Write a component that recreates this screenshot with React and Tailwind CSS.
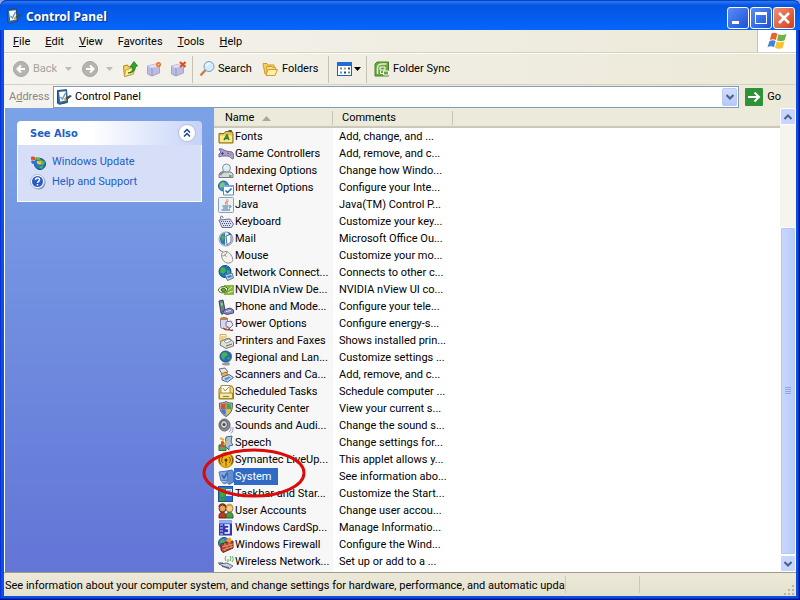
import React from "react";

const icons = {
  fonts: (
    <>
      <path d="M1 4.500h5l1.500-2H14l1 2v9.500H1z" fill="#e9c44c" stroke="#8a6a14" />
      <path d="M2 6.500h12v6.500H2z" fill="#fbe98c" />
      <path d="M6 11l3-5 2 5M7 9.500h4" stroke="#2e7d32" strokeWidth="1.500" fill="none" />
      <path d="M10 1l3 3 1-3z" fill="#356f3c" />
    </>
  ),
  game: (
    <>
      <path d="M1 3c3-1 4 1 7 2l6 1c2 1 2 6 1 7-2 0-3-3-5-3H5c-2 0-3 1-4 1V8l2-2z" fill="#aaa3cf" stroke="#6f679c" />
      <path d="M3 7.500h3M4.500 6v3" stroke="#4f4a78" />
      <circle cx="10" cy="7.500" r="1" fill="#d9534f" />
      <circle cx="12.500" cy="8.500" r="1" fill="#58b368" />
    </>
  ),
  indexing: (
    <>
      <path d="M1 11l2-2h10l2 2v3.500H1z" fill="#d5d8db" stroke="#777d84" />
      <path d="M11 13h2.500" stroke="#2faa3c" strokeWidth="1.500" />
      <path d="M6 8l-4 4" stroke="#8b8f94" strokeWidth="2" />
      <circle cx="8.500" cy="5" r="4" fill="#dceefa" stroke="#8a9299" />
      <path d="M6.500 4.500a2 2 0 0 1 2-2" stroke="#fff" fill="none" />
    </>
  ),
  internet: (
    <>
      <circle cx="5.500" cy="6" r="5" fill="#3b8fd0" stroke="#1f5c96" />
      <path d="M2 4l3-2 2 2-2 3-3 1z" fill="#7cc878" />
      <path d="M5.500 5.500h10v9.500h-10z" fill="#fff" stroke="#5f88b5" />
      <path d="M5 5h11v2H5z" fill="#7ca8dc" />
      <path d="M7.500 10.500l2 2 4-4" stroke="#1b65b3" strokeWidth="1.500" fill="none" />
    </>
  ),
  java: (
    <>
      <rect x=".5" y=".5" width="15" height="15" rx="1" fill="#edf2f7" stroke="#8ba0b6" />
      <path d="M9 2c1 2-3 3-1 5.500M10.500 4c-2 1-2 2-1 3.500" stroke="#e0702c" fill="none" />
      <path d="M4.500 9h6M5 11h5M3.500 13h8.500M11 9c3-1 2 2 0 2" stroke="#3f6990" fill="none" />
    </>
  ),
  keyboard: (
    <>
      <path d="M3 5c-2-3 2-4 2-1" stroke="#62628a" fill="none" />
      <path d="M1 6l11-1 3.500 5-2 3.500H4z" fill="#dcdff0" stroke="#6a6e9c" />
      <path d="M3 7.500h9M4 9.500h9M5 11.500h8" stroke="#4d5284" strokeDasharray="1 1" />
    </>
  ),
  mail: (
    <>
      <circle cx="8" cy="8" r="7" fill="#e8edf4" stroke="#8896ac" />
      <path d="M2 8a6 6 0 0 1 5-6v12a6 6 0 0 1-5-6z" fill="#2879bd" />
      <path d="M3 5l3-1 1 3-3 3z" fill="#52ad54" />
      <path d="M8 5l5-2v8l-4 3z" fill="#fff" stroke="#5572a0" />
      <path d="M10 1l3 2-2 1z" fill="#274b84" />
    </>
  ),
  mouse: (
    <>
      <path d="M6 5C4 2 2 4 1 1" stroke="#777" fill="none" />
      <path d="M4 5c4-3 7-1 9 2 3 4 2 8-2 8-5 1-9-6-7-10z" fill="#f4f2ee" stroke="#94908a" />
      <path d="M4 8c3 0 5-2 5-5M6.500 6l2 3" stroke="#a29f99" fill="none" />
    </>
  ),
  network: (
    <>
      <circle cx="7" cy="6.500" r="6" fill="#1873bb" stroke="#0d4f8d" />
      <path d="M3 2l4 1 1 3-3 3-3-2zM9 5l3 1-1 3-2-1z" fill="#48b04a" />
      <path d="M7 10l7-2 1.500 5-6 2.500z" fill="#c6d5e6" stroke="#5a7594" />
      <path d="M9 11l4-1 1 2-4 1z" fill="#3c80c8" />
    </>
  ),
  nvidia: (
    <>
      <rect x="6" y="3" width="10" height="10" fill="#86b93c" />
      <path d="M0 8c3-5 8-4 10-1-2 5-8 5-10 1z" fill="#eef5df" stroke="#4a6d18" />
      <path d="M3 8c1-3 4-2 5 0-1 2-4 2-5 0z" fill="#77a832" stroke="#31480f" />
      <path d="M10 8l4-3M10 11l5-2" stroke="#d7ecb2" />
    </>
  ),
  phone: (
    <>
      <path d="M1 2l4-1 2 10-4 3z" fill="#6d7c92" stroke="#39465c" />
      <path d="M2.500 4l2-.5.5 3-2 .5z" fill="#7fd07a" />
      <path d="M6 11l6-2 3.500 2v3L9 15.500 5 14z" fill="#8b87bb" stroke="#4a4780" />
      <path d="M8 12.500l5-1" stroke="#e4e3f5" />
      <path d="M3 14l2 1" stroke="#2c7c3b" strokeWidth="2" />
    </>
  ),
  power: (
    <>
      <rect x="2.500" y="1.500" width="7" height="11" rx="2" fill="#d9d7e6" stroke="#8682a4" />
      <path d="M2 3h8" stroke="#c6823c" strokeWidth="2" />
      <path d="M8 6l5-1 2 4-3 3-4-2z" fill="#eae7f4" stroke="#77729c" />
      <path d="M11 12c0 2 2 3 4 2M5 12c3 3 5 2 7 1" stroke="#9a4b34" strokeWidth="1.500" fill="none" />
    </>
  ),
  printers: (
    <>
      <path d="M2 1.500h6v7H2z" fill="#fff6d2" stroke="#e6ac34" />
      <path d="M3 8l8-3 4.500 4v4L8 15.500 2 12z" fill="#dfdfdb" stroke="#77766f" />
      <path d="M6 8l5-2 2 2-5 2z" fill="#fff" stroke="#999" />
      <path d="M8 13l6-2" stroke="#656565" />
      <path d="M3 4h4M3 6h3" stroke="#dba73c" />
    </>
  ),
  regional: (
    <>
      <ellipse cx="8" cy="14" rx="4" ry="1.500" fill="#9c9c9c" />
      <path d="M12 2a7 7 0 0 1-3 11" stroke="#8c8c8c" fill="none" />
      <circle cx="7.500" cy="6.500" r="5.500" fill="#1e6fc4" stroke="#154d8b" />
      <path d="M4 3l4-1 2 3-3 2-1 3-3-3zM9 8l3-1-1 3z" fill="#4bb24a" />
    </>
  ),
  scanners: (
    <>
      <path d="M1 2l6-1 3 4-6 2z" fill="#e5e6ec" stroke="#676c7f" />
      <path d="M3 7l5-2 2 3-5 2z" fill="#efb953" stroke="#a0701c" />
      <path d="M4 10l7-2.500 4.500 3-6 4.500L4 13z" fill="#d3dcea" stroke="#506384" />
      <path d="M6 11.500l5-2 2 1-5 3z" fill="#5792cf" />
    </>
  ),
  scheduled: (
    <>
      <path d="M1 5l3-3h10l1.500 3v10H1z" fill="#f3d873" stroke="#9b7c25" />
      <path d="M3 1.500h9v8H3z" fill="#fff" stroke="#a08d56" />
      <path d="M5 4l2 3 4-4" stroke="#c2952c" fill="none" />
      <path d="M1.500 9h13v5.500h-13z" fill="#f8e596" stroke="#a98931" />
      <path d="M5 12.500h6" stroke="#4d9b48" />
    </>
  ),
  security: (
    <>
      <path d="M8 .5C6 2 3 2 1.500 2 1 8 3 13 8 15.500 13 13 15 8 14.500 2 13 2 10 2 8 .5z" fill="#a8adb6" stroke="#60656e" />
      <path d="M7.500 2C6 3 4 3.200 2.800 3.200L3 8h4.500z" fill="#e2492f" />
      <path d="M8.500 2c1.500 1 3.500 1.200 4.700 1.200L13 8H8.500z" fill="#4aa73c" />
      <path d="M3.200 8.500h4.300V14c-2.500-1.500-3.800-3-4.300-5.500z" fill="#2f77d8" />
      <path d="M12.800 8.500H8.500V14c2.500-1.500 3.800-3 4.300-5.500z" fill="#f3c62c" />
    </>
  ),
  sounds: (
    <>
      <ellipse cx="6.500" cy="7" rx="5.500" ry="6" fill="#8a8f96" stroke="#5c6066" />
      <ellipse cx="6" cy="6.500" rx="3.500" ry="4" fill="#d4d6d9" stroke="#4e5155" />
      <circle cx="6" cy="6.500" r="1.500" fill="#45484d" />
      <path d="M11 14c2-1 2-3 2-5M13 15.500c2-2 2-4 2-6" stroke="#8b97cf" fill="none" />
    </>
  ),
  speech: (
    <>
      <path d="M1 10h7v5.500H1z" fill="#58a95a" stroke="#2a6c35" />
      <path d="M3 8c0-3 3-3 3 0l1 4H2z" fill="#c8552d" />
      <path d="M8 2l6-1-1 6 2 3-4 1v4l-4-4z" fill="#a9c6e6" stroke="#42658e" />
      <path d="M2 3l4 2M10 4L6 10" stroke="#e4b23c" strokeWidth="2" />
    </>
  ),
  symantec: (
    <>
      <circle cx="8" cy="8" r="7.500" fill="#f0b817" stroke="#b5841a" />
      <circle cx="8" cy="8" r="1.500" fill="#4d3606" />
      <path d="M5 5a4 4 0 0 0 0 6M11 5a4 4 0 0 1 0 6M3 3.500a7 7 0 0 0 0 9M13 3.500a7 7 0 0 1 0 9M8 9v5" stroke="#6f500d" fill="none" />
    </>
  ),
  system: (
    <>
      <path d="M9 2l5-1 1.500 2v10L11 15.500 9 13z" fill="#5f8dce" stroke="#456fae" />
      <path d="M1 3l8-1 1 9-7 1z" fill="#82a8df" stroke="#4a75b6" />
      <path d="M4 6l2 3 3-5" stroke="#2e5fae" strokeWidth="1.500" fill="none" />
      <path d="M3 13l7-1 1 2-5 1.500z" fill="#7197d3" />
    </>
  ),
  taskbar: (
    <>
      <rect x=".5" y=".5" width="14" height="15" fill="#2f6fce" stroke="#1d4f9b" />
      <path d="M2 2h5v9H2z" fill="#3ea63d" />
      <path d="M8 3h6v7H8z" fill="#d6e6fb" />
      <path d="M1 12h6v3H1z" fill="#35983a" />
      <path d="M9 5h4M9 7h4" stroke="#5785c4" />
    </>
  ),
  users: (
    <>
      <path d="M1 13c0-5 7-5 7 0v2H1z" fill="#bd3b26" stroke="#73200f" />
      <path d="M8 13c0-5 7-5 7 0v2H8z" fill="#4f9b43" stroke="#28602a" />
      <circle cx="4.500" cy="5.500" r="3.500" fill="#e8a366" stroke="#5f2d12" />
      <circle cx="11.500" cy="5.500" r="3.500" fill="#f5ce94" stroke="#a8742e" />
      <path d="M1 4c1-4 6-4 7 0" stroke="#6d371a" strokeWidth="1.500" fill="none" />
      <path d="M8.500 3.500c1-3 5-3 6 0" stroke="#d8a432" strokeWidth="1.500" fill="none" />
    </>
  ),
  cardspace: (
    <>
      <rect x="1" y=".5" width="13" height="15" fill="#3436b0" />
      <path d="M1 .5h13v3H1z" fill="#8db7f4" />
      <path d="M2 5h3M2 8h3M2 11h3M2 14h3" stroke="#c8d3ff" />
      <path d="M6.500 5H11v3.500H7.500H11V13H6.500" stroke="#fff" strokeWidth="1.500" fill="none" />
    </>
  ),
  firewall: (
    <>
      <circle cx="6" cy="6" r="5.500" fill="#2d7fc6" stroke="#195590" />
      <path d="M2 3l4-1 1 3-4 3z" fill="#53b250" />
      <path d="M3 7l12-3v7L5 15.500 3 13z" fill="#b8402a" stroke="#702010" />
      <path d="M4 10l11-3M4.500 13L15 9.500M7 6v3M11 5v3M9 9v3M13 8v3M7 12v2" stroke="#f1b79e" strokeWidth=".7" />
      <path d="M8 4c0-3 4-2 3-4 3 2 3 4 1 6z" fill="#f2992c" />
    </>
  ),
  wireless: (
    <>
      <path d="M1 10l8-1 6 3-4 3z" fill="#cdd0d8" stroke="#666c7c" />
      <path d="M0 9h5M4 12.500l7 1" stroke="#4c536b" />
      <path d="M10 8V5M8 7C7 5 7 4 8 2M12 7c1-2 1-3 0-5M14 8c2-2 1-5 0-6" stroke="#48a844" fill="none" />
    </>
  ),
  panel: (
    <>
      <path d="M1.500 1.500l9-.8 1 12.800-8 1.800-2-1z" fill="#2b6aa5" stroke="#264b73" />
      <path d="M3 3l6.700-.7.800 9-6.300 1.500z" fill="#fffdf4" />
      <path d="M4.500 8l2 2 3-6" stroke="#64a3cc" strokeWidth="1.500" fill="none" />
      <path d="M9 9l5-3 2 1-5 4z" fill="#3d4d5a" />
      <path d="M8 10l2 1" stroke="#e8a43c" strokeWidth="2" />
    </>
  ),
  update: (
    <>
      <circle cx="10" cy="10" r="5.500" fill="#247cba" stroke="#174c7f" />
      <path d="M7 8l4-2 4 2-2 3-4-1zM9 13l4-1-1 3z" fill="#65b83d" />
      <path d="M1 3c2-1 3 0 4 0l1 3c-2 1-3-1-5 0z" fill="#da5225" />
      <path d="M5.500 3c2 0 3 1 4 0l1 3c-2 1-3 0-4 0z" fill="#60b347" />
      <path d="M1 7c2-1 3 0 5 0l1 3c-2 1-4-1-5 0z" fill="#326ed0" />
      <path d="M6.500 7c2 0 3 1 4 0l1 3c-2 1-3 0-4 0z" fill="#f2c832" />
    </>
  ),
  help: (
    <>
      <circle cx="8.500" cy="8.500" r="7" fill="#7b879f" />
      <circle cx="7.500" cy="7.500" r="7" fill="#fff" stroke="#a8b5d6" />
      <circle cx="7.500" cy="7.500" r="5.500" fill="#285bc5" />
      <path d="M5.500 6c0-3 4.500-2.500 4 0 0 1.300-2 1.500-2 3M7.500 10v1.500" stroke="#fff" strokeWidth="1.500" fill="none" />
    </>
  ),
  back: (
    <>
      <circle cx="8" cy="8" r="7.500" fill="#b5b4ae" stroke="#a5a49d" />
      <path d="M12 8H5M8 4.500L4.500 8 8 11.500" stroke="#fff" strokeWidth="2" fill="none" />
    </>
  ),
  forward: (
    <>
      <circle cx="8" cy="8" r="7.500" fill="#b5b4ae" stroke="#a5a49d" />
      <path d="M4 8h7M8 4.500L11.500 8 8 11.500" stroke="#fff" strokeWidth="2" fill="none" />
    </>
  ),
  up: (
    <>
      <path d="M1.500 5l4-1 1 2 5-1v8l-9 2.500z" fill="#f7d55b" stroke="#b58a20" />
      <path d="M3.500 9L13 6l-1.500 7-9 2.500z" fill="#fdf09c" stroke="#caa337" />
      <path d="M6 12c4-1 5-3 4.500-6H8l4-5.500L15.500 5l-2 .5c0 4-3 7-7.500 6.500z" fill="#33a52c" stroke="#15701a" strokeWidth=".7" />
    </>
  ),
  mapDrive: (
    <>
      <path d="M1.500 5L10 3l3.500 2v7L6 15l-4.500-2z" fill="#bcbce0" stroke="#a3a4cc" />
      <path d="M1.500 5L6 7l7.500-2L10 3z" fill="#e0e0f4" />
      <path d="M6 7v8" stroke="#9494c4" />
      <circle cx="12.500" cy="3.500" r="2.500" fill="#ef6b2e" />
      <circle cx="12.500" cy="3.500" r="1" fill="#ffd95c" />
    </>
  ),
  unmapDrive: (
    <>
      <path d="M1.500 5L10 3l3.500 2v7L6 15l-4.500-2z" fill="#bcbce0" stroke="#a3a4cc" />
      <path d="M1.500 5L6 7l7.500-2L10 3z" fill="#e0e0f4" />
      <path d="M6 7v8" stroke="#9494c4" />
      <path d="M10 1l5.500 5M15.500 1L10 6" stroke="#e24a26" strokeWidth="2" />
    </>
  ),
  search: (
    <>
      <path d="M6.500 9L1.500 14.500" stroke="#c58247" strokeWidth="2.500" />
      <circle cx="10" cy="5.500" r="5" fill="#d2ecfc" stroke="#6fa0d0" />
      <path d="M7.500 5a3 3 0 0 1 3-2.500" stroke="#fff" strokeWidth="1.500" fill="none" />
    </>
  ),
  folders: (
    <>
      <path d="M1 2.500h4l1 1.500h6v8L3 13z" fill="#f6cf62" stroke="#d19a26" />
      <path d="M4.500 5.500h5l1 1h3v6l-8 2z" fill="#fbe08a" stroke="#d19a26" />
      <path d="M6 8.500h9.500L13 14.500H4z" fill="#fdf0a8" stroke="#d19a26" />
    </>
  ),
  views: (
    <>
      <rect x=".5" y="1.500" width="14" height="13" fill="#fff" stroke="#1d63bd" />
      <path d="M0 1h15v4H0z" fill="#1f6dd2" />
      <path d="M3 7.500h2M3 11.500h2" stroke="#5a93cf" strokeWidth="2" />
      <path d="M7 7.500h2" stroke="#e08a5a" strokeWidth="2" />
      <path d="M7 11.500h2M11 7.500h2" stroke="#26478e" strokeWidth="2" />
      <path d="M11 11.500h2" stroke="#4da84b" strokeWidth="2" />
    </>
  ),
  sync: (
    <>
      <path d="M3 1h11.500v14H1V3z" fill="#6aa83e" stroke="#448427" />
      <path d="M3.500 13V7c0-3 2-4 5-4h4" stroke="#dff0c9" strokeWidth="1.500" fill="none" />
      <path d="M6 6h5v3H6z" fill="#6aa83e" stroke="#fff" />
      <path d="M9.500 10h5v4h-5z" fill="#6aa83e" stroke="#fff" />
      <path d="M6.500 10v2.500H9" stroke="#fff" fill="none" />
    </>
  ),
};

const rows = [
  ["fonts", "Fonts", "Add, change, and ..."],
  ["game", "Game Controllers", "Add, remove, and c..."],
  ["indexing", "Indexing Options", "Change how Windo..."],
  ["internet", "Internet Options", "Configure your Inte..."],
  ["java", "Java", "Java(TM) Control P..."],
  ["keyboard", "Keyboard", "Customize your key..."],
  ["mail", "Mail", "Microsoft Office Ou..."],
  ["mouse", "Mouse", "Customize your mo..."],
  ["network", "Network Connect...", "Connects to other c..."],
  ["nvidia", "NVIDIA nView De...", "NVIDIA nView UI co..."],
  ["phone", "Phone and Mode...", "Configure your tele..."],
  ["power", "Power Options", "Configure energy-s..."],
  ["printers", "Printers and Faxes", "Shows installed prin..."],
  ["regional", "Regional and Lan...", "Customize settings ..."],
  ["scanners", "Scanners and Ca...", "Add, remove, and c..."],
  ["scheduled", "Scheduled Tasks", "Schedule computer ..."],
  ["security", "Security Center", "View your current s..."],
  ["sounds", "Sounds and Audi...", "Change the sound s..."],
  ["speech", "Speech", "Change settings for..."],
  ["symantec", "Symantec LiveUp...", "This applet allows y..."],
  ["system", "System", "See information abo..."],
  ["taskbar", "Taskbar and Star...", "Customize the Start..."],
  ["users", "User Accounts", "Change user accou..."],
  ["cardspace", "Windows CardSp...", "Manage Informatio..."],
  ["firewall", "Windows Firewall", "Configure the Wind..."],
  ["wireless", "Wireless Network...", "Set up or add to a ..."],
];

const menus = ["File", "Edit", "View", "Favorites", "Tools", "Help"];

const Icon = ({ name }) => (
  <svg className="w-4 h-4 shrink-0" viewBox="0 0 16 16" fill="none" aria-hidden="true">
    {icons[name]}
  </svg>
);

const Caret = ({ className }) => (
  <svg className={`w-[7px] h-1 shrink-0 ${className}`} viewBox="0 0 7 4" aria-hidden="true">
    <path d="M0 0h7L3.500 4z" fill="currentColor" />
  </svg>
);

const Chevron = ({ up }) => (
  <svg className="w-2 h-2" viewBox="0 0 8 8" fill="none" aria-hidden="true">
    <path d={up ? "M.5 6L4 2.500 7.500 6" : "M.5 2L4 5.500 7.500 2"} stroke="#4d6185" strokeWidth="2" />
  </svg>
);

const Separator = () => <div className="w-px h-[27px] bg-[#c5c2b4] shrink-0" />;

const TitleBar = () => (
  <header className="flex items-center h-[30px] pl-[6px] pr-[5px] rounded-t-[7px] bg-linear-to-b from-[#2a7bf5] via-[#0455e4] via-15% to-[#0566fb] border-t border-[#0a3fc0]">
    <Icon name="panel" />
    <h1 className="ml-1 pt-[3px] flex-1 font-['Noto_Sans','Open_Sans',sans-serif] font-bold text-[12px] text-white [text-shadow:1px_1px_1px_#0a2f8c]">
      Control Panel
    </h1>
    <div className="flex gap-px pt-1">
      <button aria-label="Minimize" className="w-[22px] h-[22px] rounded-[3px] border border-white bg-linear-to-br from-[#5c8df5] to-[#1a4fd8]">
        <svg viewBox="0 0 20 20" className="w-5 h-5"><path d="M4 13h7v3H4z" fill="#fff" /></svg>
      </button>
      <button aria-label="Maximize" className="w-[22px] h-[22px] rounded-[3px] border border-white bg-linear-to-br from-[#5c8df5] to-[#1a4fd8]">
        <svg viewBox="0 0 20 20" className="w-5 h-5"><path d="M4 4h12v12H4zM5 7v8h10V7z" fill="#fff" fillRule="evenodd" /></svg>
      </button>
      <button aria-label="Close" className="w-[22px] h-[22px] rounded-[3px] border border-white bg-linear-to-br from-[#ee8f74] to-[#d03c14]">
        <svg viewBox="0 0 20 20" className="w-5 h-5"><path d="M5 5l10 10M15 5L5 15" stroke="#fff" strokeWidth="2.500" /></svg>
      </button>
    </div>
  </header>
);

const MenuBar = () => (
  <nav className="flex h-[23px] border-b border-[#d4d1c2]">
    <div className="flex flex-1 items-center gap-[15px] pl-[9px] pt-px">
      {menus.map((menu) => {
        const at = menu === "Favorites" ? 1 : 0;
        return (
          <button key={menu}>
            {menu.slice(0, at)}
            <span className="underline">{menu[at]}</span>
            {menu.slice(at + 1)}
          </button>
        );
      })}
    </div>
    <div className="flex w-[39px] items-center justify-center bg-white border-l border-[#c5c2b4]">
      <svg className="w-5 h-[18px]" viewBox="0 0 20 18" aria-hidden="true">
        <path d="M4.500 1.500C7 0 9 1 10.500 1.800L8.800 8C7 7 5 7 2.800 8z" fill="#e8622c" />
        <path d="M11.500 2.300c2.500 1.200 5 1 8-.3L17.700 8.300c-2.700 1.200-5 1.200-7.700.2z" fill="#6fb444" />
        <path d="M2.500 9C5 7.800 7 8 8.600 9L7 15.200c-2.200-1.200-4-1.200-6.500 0z" fill="#4384d8" />
        <path d="M9.700 9.500c2.500 1.200 5 1 7.800 0l-1.800 6.300c-2.500 1.200-5 1.200-7.700 0z" fill="#f7c331" />
      </svg>
    </div>
  </nav>
);

const ToolBar = () => (
  <div className="flex items-center h-8 pl-[9px] border-t border-t-white border-b border-b-[#d4d1c2]">
    <button disabled className="flex items-center gap-1 w-[69px] text-[#a5a398]">
      <Icon name="back" />
      <span className="w-7 text-left">Back</span>
      <Caret className="text-[#c0bdb0]" />
    </button>
    <button disabled className="flex items-center gap-2 w-10">
      <Icon name="forward" />
      <Caret className="text-[#c0bdb0]" />
    </button>
    <div className="flex gap-2 w-[70px]">
      <button aria-label="Up"><Icon name="up" /></button>
      <button aria-label="Map network drive"><Icon name="mapDrive" /></button>
      <button aria-label="Disconnect network drive"><Icon name="unmapDrive" /></button>
    </div>
    <Separator />
    <button className="flex items-center gap-[3px] w-[69px] pl-[6px]"><Icon name="search" />Search</button>
    <button className="flex items-center gap-1 w-[66px]"><Icon name="folders" />Folders</button>
    <Separator />
    <button aria-label="Views" className="flex items-center gap-px w-[37px] pl-2">
      <Icon name="views" />
      <Caret className="text-black" />
    </button>
    <Separator />
    <button className="flex items-center gap-[3px] pl-[7px]"><Icon name="sync" />Folder Sync</button>
  </div>
);

const AddressBar = () => (
  <div className="flex items-center h-[23px] pl-[5px] pr-[15px]">
    <label htmlFor="address" className="w-11 text-[#8a887d]">
      A<span className="underline">d</span>dress
    </label>
    <div className="flex flex-1 items-center h-[22px] pl-[2px] pr-px bg-white border border-[#7f9db9]">
      <Icon name="panel" />
      <input id="address" defaultValue="Control Panel" className="flex-1 min-w-0 ml-[3px] pt-px outline-none" />
      <button aria-label="Show addresses" className="flex items-center justify-center w-[15px] h-[18px] rounded-xs bg-linear-to-b from-[#d3defd] to-[#b5c8f8] border border-[#b9c9f3]">
        <Chevron />
      </button>
    </div>
    <button className="flex items-center gap-1 ml-[6px]">
      <svg className="w-[18px] h-[18px]" viewBox="0 0 18 18" aria-hidden="true">
        <rect width="18" height="18" rx="1" fill="#2f9138" />
        <path d="M3 9h11M9.500 4.500L14 9l-4.500 4.500" stroke="#fff" strokeWidth="2" fill="none" />
      </svg>
      Go
    </button>
  </div>
);

const SideBar = () => (
  <aside className="w-[209px] shrink-0 px-3 pt-[13px] bg-linear-to-b from-[#7ba2e7] to-[#6375d6]">
    <section className="w-[185px]">
      <div className="flex items-center justify-between h-6 pl-[13px] pr-[7px] rounded-t-[4px] bg-linear-to-r from-white from-40% to-[#c6d3f7]">
        <h2 className="pt-px font-['DejaVu_Sans_Condensed','DejaVu_Sans',sans-serif] font-bold text-[#215dc6]">See Also</h2>
        <button aria-label="Collapse" className="flex items-center justify-center w-4 h-4 rounded-full bg-white shadow-[0_0_1px_1px_#b4bedb]">
          <svg className="w-2 h-[10px]" viewBox="0 0 8 10" fill="none" aria-hidden="true">
            <path d="M1 4.500l3-3 3 3M1 8.500l3-3 3 3" stroke="#1f3f86" strokeWidth="1.500" />
          </svg>
        </button>
      </div>
      <div className="flex flex-col gap-1 h-[57px] pt-[9px] pl-3 bg-[#d6dff7] border border-t-0 border-white text-[#215dc6]">
        <a href="#windows-update" className="flex items-center gap-[6px]"><Icon name="update" />Windows Update</a>
        <a href="#help" className="flex items-center gap-[6px]"><Icon name="help" />Help and Support</a>
      </div>
    </section>
  </aside>
);

const FileList = () => (
  <main className="flex-1 min-w-0 bg-white bg-[linear-gradient(#f7f7f7,#f7f7f7)] bg-[length:119px_100%] bg-no-repeat">
    <table className="w-full table-fixed border-collapse text-left">
      <colgroup>
        <col className="w-[119px]" />
        <col className="w-[120px]" />
        <col />
      </colgroup>
      <thead>
        <tr className="h-[20px] bg-[#ebeadb] shadow-[inset_0_-2px_1px_#cbc7b8]">
          <th className="p-0 font-normal">
            <div className="flex items-center gap-2 h-[14px] pl-[11px] border-r border-[#c7c5b2]">
              Name
              <svg className="w-[9px] h-[5px]" viewBox="0 0 9 5" aria-hidden="true"><path d="M0 5h9L4.500 0z" fill="#aca899" /></svg>
            </div>
          </th>
          <th className="p-0 font-normal">
            <div className="flex items-center h-[14px] pl-[9px] border-r border-[#c7c5b2]">Comments</div>
          </th>
          <td />
        </tr>
      </thead>
      <tbody>
        {rows.map(([icon, name, comment]) => (
          <tr key={icon} className="h-[17px]">
            <td className="relative p-0 pl-1 whitespace-nowrap">
              <div className="flex items-center">
                <Icon name={icon} />
                <span className={icon === "system" ? "pl-px pt-px pr-[6px] bg-[#316ac5] text-white" : "pl-px pt-px"}>
                  {name}
                </span>
              </div>
              {icon === "system" && (
                <svg className="absolute z-10 -left-3 -top-5 w-[104px] h-[51px]" viewBox="0 0 104 51" fill="none" aria-hidden="true">
                  <ellipse cx="52" cy="25" rx="50" ry="23" stroke="#dc0a0a" strokeWidth="3" />
                </svg>
              )}
            </td>
            <td className="p-0 pl-[6px] pt-px whitespace-nowrap">{comment}</td>
            <td />
          </tr>
        ))}
      </tbody>
    </table>
  </main>
);

const ScrollBar = () => (
  <div className="flex flex-col w-4 shrink-0 bg-[#f5f4ee]">
    <button aria-label="Scroll up" className="flex items-center justify-center h-[17px] rounded-xs bg-[#c6d5fd] border border-white"><Chevron up /></button>
    <div className="flex-[102]" />
    <div className="flex flex-[328] flex-col items-center justify-center gap-px rounded-xs bg-linear-to-r from-[#c9d7fd] to-[#b9cbf9] border border-white shadow-[inset_0_0_0_1px_#b5c7f3]">
      <i className="w-[6px] h-px bg-[#8ca8e8]" />
      <i className="w-[6px] h-px bg-[#8ca8e8]" />
      <i className="w-[6px] h-px bg-[#8ca8e8]" />
      <i className="w-[6px] h-px bg-[#8ca8e8]" />
    </div>
    <button aria-label="Scroll down" className="flex items-center justify-center h-[17px] rounded-xs bg-[#c6d5fd] border border-white"><Chevron /></button>
  </div>
);

const StatusBar = () => (
  <footer className="flex items-center h-6 border-t border-[#9d9b8e] bg-linear-to-b from-[#ece9d8] to-[#e4e1cf]">
    <p className="pl-px pt-[3px] whitespace-nowrap">
      See information about your computer system, and change settings for hardware, performance, and automatic upda
    </p>
    <div className="w-[75px] h-[17px] border-x border-[#cbc8b8]" />
    <svg className="w-3 h-3 ml-auto mr-px self-end" viewBox="0 0 12 12" aria-hidden="true">
      <path d="M9 1h2v2H9zM9 5h2v2H9zM5 5h2v2H5zM9 9h2v2H9zM5 9h2v2H5zM1 9h2v2H1z" fill="#b8b4a3" />
    </svg>
  </footer>
);

const App = () => (
  <div className="bg-[#8fa6dc] font-[Roboto,'Noto_Sans',sans-serif] text-[11px] leading-4 text-black">
    <div className="flex flex-col min-h-screen rounded-t-[7px] bg-[#0a50e4] shadow-[inset_-1px_-1px_0_#00138c,inset_-2px_-2px_0_#0831b9,inset_1px_0_0_#0831d9]">
      <TitleBar />
      <div className="flex flex-1 flex-col mx-1 mb-1 bg-[#ece9d8]">
        <div className="bg-linear-to-r from-[#f4f3ee] to-[#ece9d8]">
          <MenuBar />
          <ToolBar />
          <AddressBar />
        </div>
        <div className="flex flex-1 pl-px bg-white">
          <SideBar />
          <FileList />
          <ScrollBar />
        </div>
        <StatusBar />
      </div>
    </div>
  </div>
);

export default App;
